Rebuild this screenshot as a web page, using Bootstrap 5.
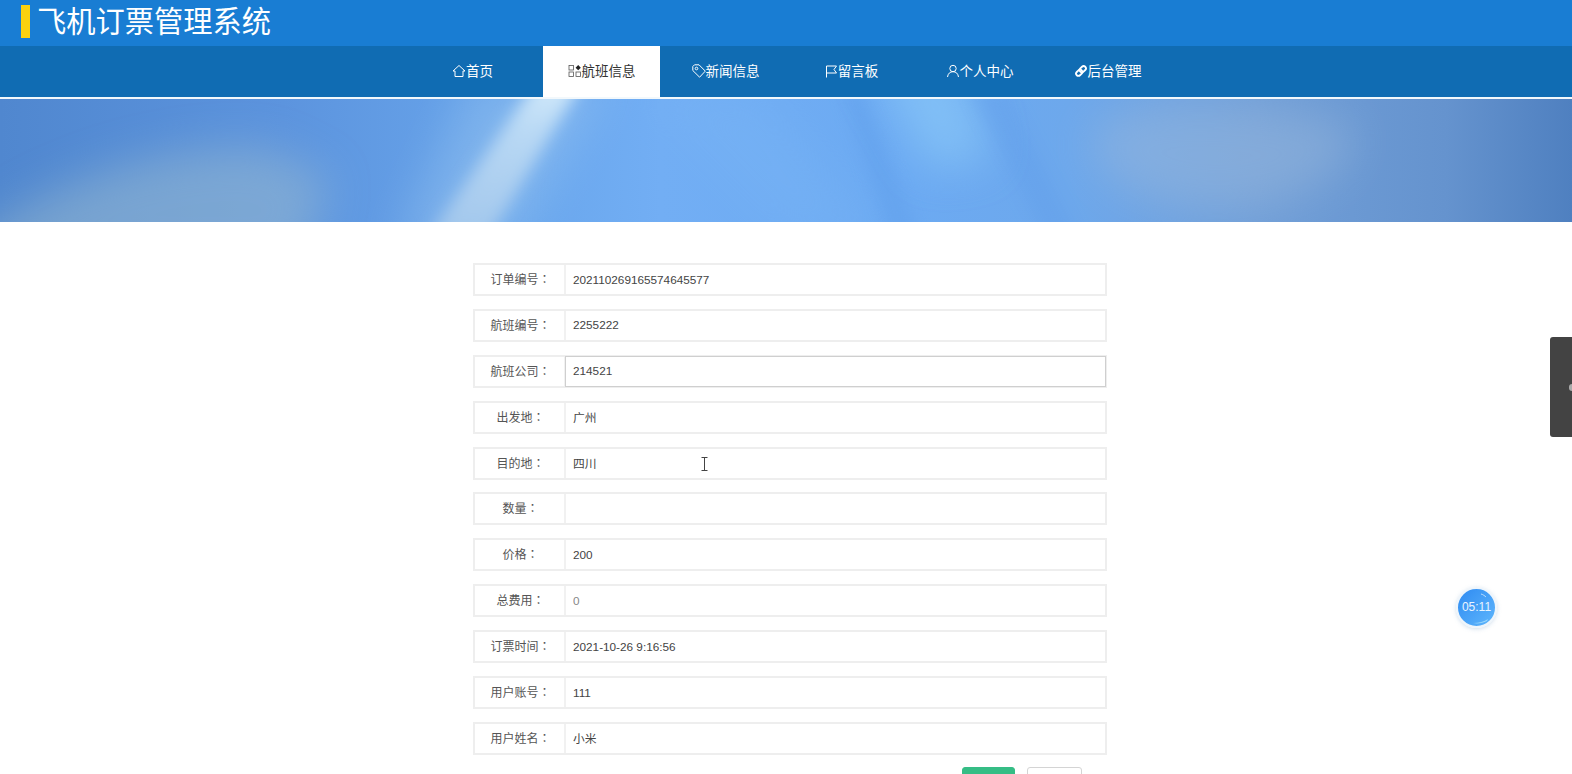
<!DOCTYPE html>
<html lang="zh-CN">
<head>
<meta charset="utf-8">
<title>飞机订票管理系统</title>
<link rel="stylesheet" href="https://cdn.jsdelivr.net/npm/bootstrap@5.3.0/dist/css/bootstrap.min.css">
<script src="https://cdn.jsdelivr.net/npm/bootstrap@5.3.0/dist/js/bootstrap.bundle.min.js"></script>
<style>
html,body{height:774px;overflow:hidden;background:#fff}
body{font-family:"Liberation Sans","Noto Sans CJK SC",sans-serif;color:#555;position:relative}
.top-head{height:46px;background:#197dd3;padding-left:21px}
.title-mark{width:9px;height:33px;background:#fbd10f;margin-top:5px}
.title-text{font:400 29.25px/1 "Noto Sans CJK SC",sans-serif;color:#fff;margin:0 0 0 7px;padding-top:5px}
.main-nav{height:53px;background:#106cb3;border-bottom:2px solid #f2f8fc;padding-left:402px}
.nav-cell{height:51px;padding-bottom:2px;color:#fff;font:13.5px/1 "Noto Sans CJK SC",sans-serif;text-decoration:none}
.nav-cell svg{width:14px;height:14px;flex:none}
.nav-cell.on{background:#fff;color:#333}
.w1{width:141px}.w2{width:117px}.w3{width:131px}.w4{width:120px}.w5{width:137px}.w6{width:119px}
.hero{height:123px;overflow:hidden}
.hero svg{display:block;width:100%;height:123px}
.form-wrap{width:634px;margin:41px 0 0 473px}
.field-row{height:33px;margin-bottom:12.9px;border:2px solid #eeeeee;background:#fff}
.field-label{width:91px;height:100%;border-right:2px solid #f1f1f1;padding-left:2px;text-align:center;font:12px/28px "Noto Sans CJK SC",sans-serif;color:#555;flex:none}
.colon-mark{font-family:"Noto Sans CJK TC",sans-serif}
.field-input{flex:1;height:100%;border:0;background:#fff;padding:0 7px 1px;font:11.75px "Liberation Sans","Noto Sans CJK SC",sans-serif;color:#444;outline:0;min-width:0}
.field-input.muted-val{color:#888}
.field-row.focused .field-input{box-shadow:0 0 0 1px #cfcfcf;position:relative}
.btn-line{gap:12px;padding-right:25px;margin-top:-1px}
.save-btn{width:53px;height:38px;background:#35bd85;border:1px solid #35bd85;border-radius:3px;padding:0}
.back-btn{width:55px;height:38px;background:#fff;border:1px solid #d4d4d4;border-radius:3px;padding:0}
.side-handle{position:absolute;left:1550px;top:337px;width:22px;height:100px;background:#434343;border-radius:3px 0 0 3px}
.side-handle i{position:absolute;right:0;top:47px;width:3px;height:7px;background:#aaa;border-radius:4px 0 0 4px}
.timer{position:absolute;left:1456px;top:587px;width:41px;height:41px;border-radius:50%;border:2px solid #eef5fb;background:linear-gradient(135deg,#2f8bf2,#5ab2fb 90%);color:#eaf5ff;font:12px/37px "Liberation Sans",sans-serif;text-align:center;box-shadow:0 1px 4px rgba(120,160,200,.35);overflow:hidden}
.timer svg{position:absolute;left:0;top:0;width:37px;height:37px}
.timer span{position:relative}
.cursor-mark{position:absolute;left:700px;top:457px;width:9px;height:14px}
</style>
</head>
<body>
<header class="top-head d-flex align-items-start">
  <span class="title-mark"></span>
  <h1 class="title-text">飞机订票管理系统</h1>
</header>
<nav class="main-nav d-flex">
  <a class="nav-cell w1 d-flex justify-content-center align-items-center" href="#"><svg viewBox="0 0 14 14" fill="none" stroke="#fff"><path d="M1 7 7 1.500 13 7h-2v5.500H3V7z"/></svg>首页</a>
  <a class="nav-cell on w2 d-flex justify-content-center align-items-center" href="#"><svg viewBox="0 0 14 14" fill="none" stroke="#555" stroke-width=".8"><rect x="1" y="1.500" width="4.500" height="4.500"/><rect x="1" y="8" width="4.500" height="4.500"/><rect x="8" y="8" width="4.500" height="4.500"/><path d="M10.200 1 12.800 3.700 10.200 6.300 7.600 3.700z" fill="#222" stroke="none"/></svg>航班信息</a>
  <a class="nav-cell w3 d-flex justify-content-center align-items-center" href="#"><svg viewBox="0 0 14 14" fill="none" stroke="#fff"><path d="M.8 2.500 2.500.8H7l6.300 6.300-5.700 6.100L.8 6.500z"/><circle cx="4.500" cy="4.500" r="1.300"/></svg>新闻信息</a>
  <a class="nav-cell w4 d-flex justify-content-center align-items-center" href="#"><svg viewBox="0 0 14 14" fill="none" stroke="#fff"><path d="M2.500 13.500V2H12.500L10 5.500 12.500 9H2.500"/></svg>留言板</a>
  <a class="nav-cell w5 d-flex justify-content-center align-items-center" href="#"><svg viewBox="0 0 14 14" fill="none" stroke="#fff"><circle cx="7" cy="4.500" r="3.200"/><path d="M1.500 13c.5-3.500 2.500-5.300 5.500-5.300s5 1.800 5.500 5.300"/></svg>个人中心</a>
  <a class="nav-cell w6 d-flex justify-content-center align-items-center" href="#"><svg viewBox="0 0 14 14" fill="none" stroke="#fff" stroke-width="1.800"><rect x="1" y="4.700" width="7" height="4.600" rx="2.300" transform="rotate(-45 7 7)"/><rect x="6" y="4.700" width="7" height="4.600" rx="2.300" transform="rotate(-45 7 7)"/></svg>后台管理</a>
</nav>
<div class="hero">
  <svg viewBox="0 0 1572 123" preserveAspectRatio="none" aria-hidden="true">
    <defs>
      <linearGradient id="skyBase" x1="0" x2="1" y1="0" y2="0">
        <stop offset="0" stop-color="#5087cf"/><stop offset=".18" stop-color="#5c94de"/><stop offset=".33" stop-color="#69a6ec"/>
        <stop offset=".42" stop-color="#72aef4"/><stop offset=".58" stop-color="#6caaf2"/><stop offset=".68" stop-color="#6da8ec"/>
        <stop offset=".8" stop-color="#719fd8"/><stop offset=".92" stop-color="#6593ce"/><stop offset="1" stop-color="#4f80c0"/>
      </linearGradient>
      <linearGradient id="rayFade" x1="0" x2="0" y1="0" y2="1">
        <stop offset="0" stop-color="#dff3fd" stop-opacity=".95"/><stop offset=".35" stop-color="#d2e8f7" stop-opacity=".7"/><stop offset="1" stop-color="#bdd6ec" stop-opacity=".55"/>
      </linearGradient>
      <filter id="blurA" filterUnits="userSpaceOnUse" x="-100" y="-100" width="1772" height="323"><feGaussianBlur stdDeviation="8"/></filter>
      <filter id="blurB" filterUnits="userSpaceOnUse" x="-100" y="-100" width="1772" height="323"><feGaussianBlur stdDeviation="22"/></filter>
    </defs>
    <rect width="1572" height="123" fill="url(#skyBase)"/>
    <path d="M-60 170 C20 90 160 40 270 50 L330 80 L300 170Z" fill="#9cbccd" opacity=".5" filter="url(#blurB)"/>
    <path d="M475 -20 L610 -20 L510 150 L395 150Z" fill="#9fc9f0" opacity=".4" filter="url(#blurB)"/>
    <path d="M545 -30 L590 -30 L482 150 L420 150Z" fill="url(#rayFade)" filter="url(#blurA)"/>
    <path d="M640 -10 H760 L880 140 H790Z" fill="#7ab6f5" opacity=".35" filter="url(#blurB)"/>
    <path d="M868 -40 H960 L990 60 L930 70Z" fill="#8fcdf9" opacity=".6" filter="url(#blurB)"/>
    <path d="M842 -10 H862 L920 140 H890Z" fill="#5f9eea" opacity=".45" filter="url(#blurA)"/>
    <path d="M970 -10 L1005 -10 L1080 140 L1045 140Z" fill="#5f9cea" opacity=".35" filter="url(#blurA)"/>
    <path d="M1090 35 C1120 -10 1260 0 1350 25 C1370 70 1290 115 1200 110 C1130 100 1090 80 1090 35Z" fill="#9bb9dc" opacity=".45" filter="url(#blurB)"/>
  </svg>
</div>
<form class="form-wrap">
  <div class="field-row d-flex"><label class="field-label">订单编号<span class="colon-mark" lang="zh-TW">：</span></label><input class="field-input" value="202110269165574645577"></div>
  <div class="field-row d-flex"><label class="field-label">航班编号<span class="colon-mark" lang="zh-TW">：</span></label><input class="field-input" value="2255222"></div>
  <div class="field-row focused d-flex"><label class="field-label">航班公司<span class="colon-mark" lang="zh-TW">：</span></label><input class="field-input" value="214521"></div>
  <div class="field-row d-flex"><label class="field-label">出发地<span class="colon-mark" lang="zh-TW">：</span></label><input class="field-input" value="广州"></div>
  <div class="field-row d-flex"><label class="field-label">目的地<span class="colon-mark" lang="zh-TW">：</span></label><input class="field-input" value="四川"></div>
  <div class="field-row d-flex"><label class="field-label">数量<span class="colon-mark" lang="zh-TW">：</span></label><input class="field-input" value=""></div>
  <div class="field-row d-flex"><label class="field-label">价格<span class="colon-mark" lang="zh-TW">：</span></label><input class="field-input" value="200"></div>
  <div class="field-row d-flex"><label class="field-label">总费用<span class="colon-mark" lang="zh-TW">：</span></label><input class="field-input muted-val" value="0"></div>
  <div class="field-row d-flex"><label class="field-label">订票时间<span class="colon-mark" lang="zh-TW">：</span></label><input class="field-input" value="2021-10-26 9:16:56"></div>
  <div class="field-row d-flex"><label class="field-label">用户账号<span class="colon-mark" lang="zh-TW">：</span></label><input class="field-input" value="111"></div>
  <div class="field-row d-flex"><label class="field-label">用户姓名<span class="colon-mark" lang="zh-TW">：</span></label><input class="field-input" value="小米"></div>
  <div class="btn-line d-flex justify-content-end">
    <button type="button" class="btn save-btn"></button>
    <button type="button" class="btn back-btn"></button>
  </div>
</form>
<div class="side-handle"><i></i></div>
<div class="timer"><svg viewBox="0 0 37 37" fill="none"><path d="M23 5c2 .5 4 2 5 3" stroke="#d6ecff" opacity=".8"/><path d="M15 34c6 0 11-1.500 15-4l-1 2c-4 2-9 3-14 2z" fill="#a7e0fb" opacity=".8"/></svg><span>05:11</span></div>
<svg class="cursor-mark" viewBox="0 0 9 14" fill="none" stroke="#444"><path d="M1.500.5h6M1.500 13.500h6M4.500.5v13"/></svg>
</body>
</html>
